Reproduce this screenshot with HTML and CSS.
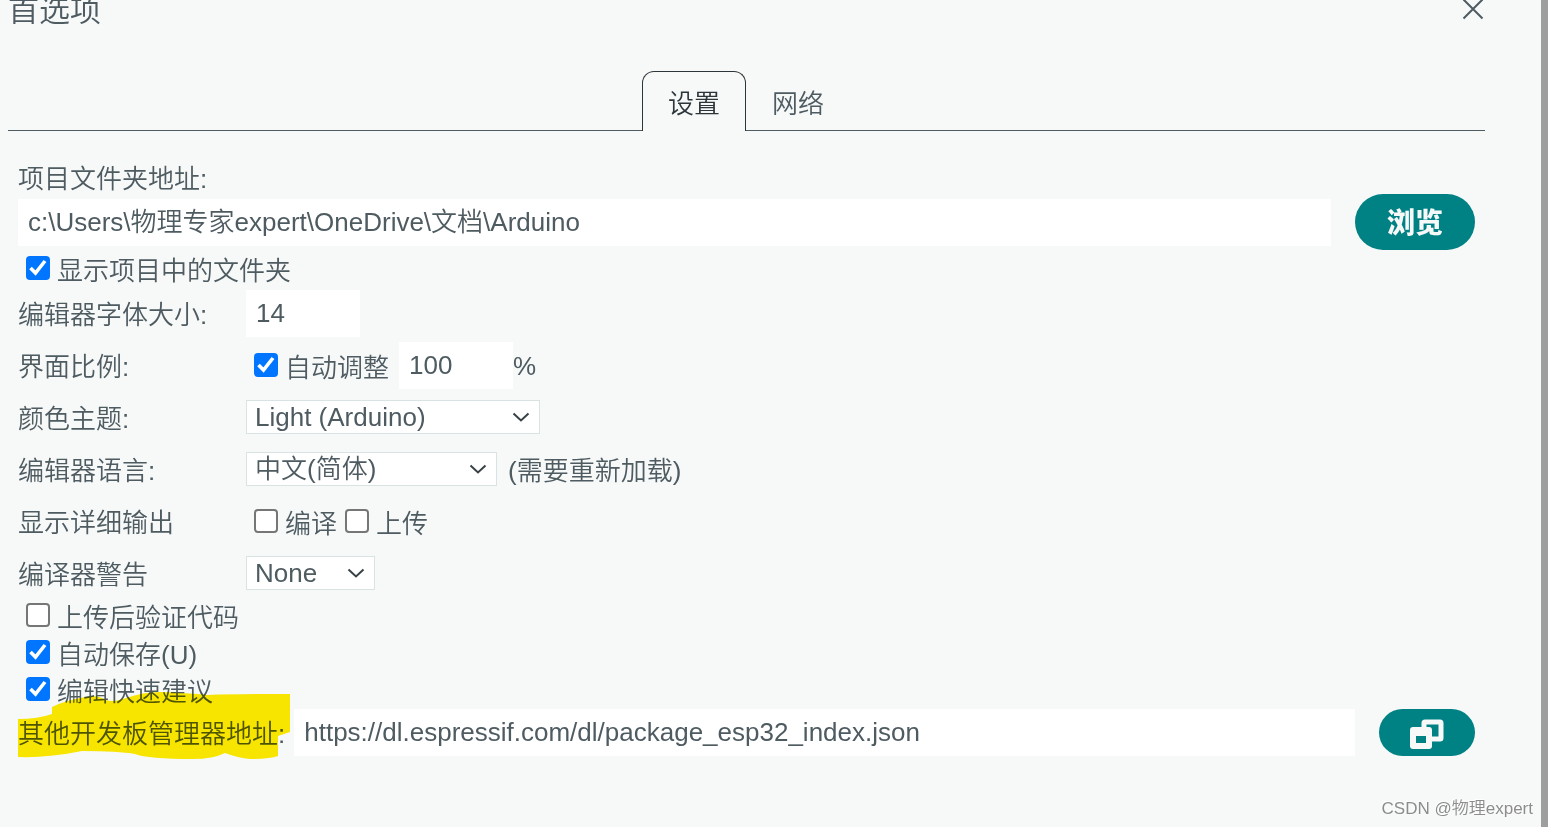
FILE: index.html
```html
<!DOCTYPE html>
<html lang="zh-CN">
<head>
  <meta charset="UTF-8" />
  <meta name="viewport" content="width=device-width, initial-scale=1.0"/>
  <title>首选项</title>
  <link rel="stylesheet" href="styles.css">
</head>
<body>
  <div class="dialog">
    <header class="dialog-header">
      <h1>首选项</h1>
      <button class="close" type="button" aria-label="关闭">
        <svg width="22" height="22" viewBox="0 0 22 22"><path d="M1.5 1.5l19 19M20.5 1.5l-19 19" fill="none" stroke="currentColor" stroke-width="2"/></svg>
      </button>
    </header>

    <div class="tabs" role="tablist">
      <button class="tab active" type="button" role="tab" aria-selected="true">设置</button>
      <button class="tab" type="button" role="tab" aria-selected="false">网络</button>
    </div>

    <form class="settings">
      <label class="path-label" for="sketchbook">项目文件夹地址:</label>
      <div class="path-row">
        <input class="field path" type="text" id="sketchbook" value="c:\Users\物理专家expert\OneDrive\文档\Arduino">
        <button class="btn" type="button">浏览</button>
      </div>
      <label class="check"><input type="checkbox" checked><span>显示项目中的文件夹</span></label>

      <div class="grid">
        <label class="name" for="fontSize">编辑器字体大小:</label>
        <div class="cell"><input class="field small" type="text" id="fontSize" value="14"></div>

        <span class="name">界面比例:</span>
        <div class="cell">
          <label class="check"><input type="checkbox" checked><span>自动调整</span></label>
          <input class="field small scale" type="text" aria-label="界面比例" value="100"><span>%</span>
        </div>

        <label class="name" for="theme">颜色主题:</label>
        <div class="cell">
          <select class="theme" id="theme"><option>Light (Arduino)</option></select>
        </div>

        <label class="name" for="lang">编辑器语言:</label>
        <div class="cell">
          <select class="lang" id="lang"><option>中文(简体)</option></select>
          <span class="note">(需要重新加载)</span>
        </div>

        <span class="name">显示详细输出</span>
        <div class="cell">
          <label class="check"><input type="checkbox"><span>编译</span></label>
          <label class="check"><input type="checkbox"><span>上传</span></label>
        </div>

        <label class="name" for="warnings">编译器警告</label>
        <div class="cell">
          <select class="warnings" id="warnings"><option>None</option></select>
        </div>
      </div>

      <label class="check"><input type="checkbox"><span>上传后验证代码</span></label>
      <label class="check"><input type="checkbox" checked><span>自动保存(U)</span></label>
      <label class="check"><input type="checkbox" checked><span>编辑快速建议</span></label>

      <div class="path-row urls">
        <label class="name" for="urls">其他开发板管理器地址:</label>
        <input class="field" type="text" id="urls" value="https://dl.espressif.com/dl/package_esp32_index.json">
        <button class="btn icon" type="button" aria-label="编辑地址">
          <svg width="36" height="32" viewBox="0 0 36 32">
            <rect x="15" y="4" width="17" height="17" rx="1" fill="none" stroke="#f7f9f9" stroke-width="5"/>
            <rect x="1" y="9" width="22" height="22" rx="3" fill="#f7f9f9"/>
            <rect x="7" y="18" width="10" height="7" fill="#008184"/>
          </svg>
        </button>
        <svg class="marker" width="272" height="68" viewBox="0 0 272 68">
          <path d="M0 27Q20 27 34 22V15Q48 8 68 5Q78 3 84 6Q92 12 108 6Q125 0 142 0Q170 1 190 3Q215 2 272 2V40L260 44V64Q252 67 232 67Q220 66 207 61Q195 67 175 67Q130 67 117 62Q100 59 64 59Q30 66 0 65Z" fill="#ffeb00"/>
        </svg>
      </div>
    </form>

    <div class="watermark">CSDN @物理expert</div>
  </div>
</body>
</html>
```
FILE: styles.css
```css
:root {
  --text: #4e5b61;
  --bg: #f7f9f9;
  --teal: #008184;
}

* {
  box-sizing: border-box;
}

body {
  margin: 0;
  background: #9e9e9e;
  overflow: hidden;
}

body, input, select, button {
  font-family: "Liberation Sans", "Noto Sans CJK SC", sans-serif;
  font-size: 26px;
  font-weight: 350;
  line-height: 30px;
  color: var(--text);
}

.dialog {
  position: relative;
  min-height: 100vh;
  margin-right: 7px;
  padding: 0 56px 0 8px;
  background: var(--bg);
}

.dialog-header {
  display: flex;
  justify-content: space-between;
  height: 71px;
}

h1 {
  margin: 0;
  font-size: 31px;
  font-weight: 350;
  line-height: 22px;
}

.close {
  display: flex;
  width: 23px;
  height: 20px;
  padding: 0;
  border: none;
  background: none;
  align-items: flex-end;
}

.tabs {
  display: flex;
  justify-content: center;
  height: 60px;
  padding-right: 1px;
  border-bottom: 1px solid var(--text);
}

.tab {
  height: 60px;
  padding: 5px 26px 0;
  border: none;
  background: none;
}

.tab.active {
  padding: 4px 25px 0;
  border: 1px solid #2c353a;
  border-bottom: none;
  border-radius: 12px 12px 0 0;
  background: var(--bg);
  color: #2c353a;
}

.settings {
  padding: 34px 10px 0;
}

.path-label {
  display: block;
  line-height: 29px;
}

.path-row {
  display: flex;
  align-items: center;
  gap: 24px;
}

.field {
  flex: 1;
  min-width: 0;
  height: 47px;
  padding: 0 10px;
  border: none;
  background: #fff;
}

.field.path {
  padding-bottom: 5px;
}

.field.small {
  flex: none;
  width: 114px;
}

.btn {
  width: 120px;
  height: 56px;
  padding: 4px 0 0;
  border: none;
  border-radius: 28px;
  background: var(--teal);
  color: var(--bg);
  font-size: 28px;
  font-weight: 900;
}

.btn.icon {
  display: flex;
  align-items: center;
  justify-content: center;
  width: 96px;
  height: 47px;
  padding-top: 2px;
}

.name {
  padding-top: 2px;
}

.check {
  display: flex;
  align-items: center;
  height: 37px;
}

.check span {
  padding-top: 4px;
}

.check input {
  appearance: none;
  width: 24px;
  height: 24px;
  margin: 0 7px 1px 8px;
  border: 2px solid #767676;
  border-radius: 4px;
  background: #fff;
}

.check input:checked {
  border: none;
  background: #0075ff url("data:image/svg+xml,%3Csvg xmlns='http://www.w3.org/2000/svg' viewBox='0 0 24 24'%3E%3Cpath d='M4.500 12l5 5L19 5' fill='none' stroke='white' stroke-width='3.600'/%3E%3C/svg%3E");
}

.grid {
  display: grid;
  grid-template-columns: 228px 1fr;
  grid-auto-rows: 47px;
  row-gap: 5px;
  align-items: center;
  margin-top: 3px;
}

.cell {
  display: flex;
  align-items: center;
}

.scale {
  margin-left: 10px;
}

.note {
  margin-left: 11px;
  padding-top: 2px;
}

select {
  appearance: none;
  height: 34px;
  margin: 0 0 2px;
  padding: 0 8px;
  border: 1px solid #dae3e3;
  border-radius: 0;
  background: #fff url("data:image/svg+xml,%3Csvg xmlns='http://www.w3.org/2000/svg' width='18' height='10'%3E%3Cpath d='M1.500 1.500L9 8.500l7.500-7' fill='none' stroke='%23374146' stroke-width='2'/%3E%3C/svg%3E") no-repeat right 9px center;
}

.theme {
  width: 294px;
}

.lang {
  width: 251px;
}

.warnings {
  width: 129px;
}

.urls {
  position: relative;
  margin-top: 1px;
}

.urls .name {
  margin-right: -15px;
}

/* highlighter stroke over the label */
.marker {
  position: absolute;
  left: 0;
  top: -17px;
  mix-blend-mode: multiply;
  pointer-events: none;
}

.watermark {
  position: absolute;
  right: 8px;
  bottom: 3px;
  color: #8c8c8c;
  font-size: 17px;
  text-shadow: -1px -1px 0 #fff;
}
```
